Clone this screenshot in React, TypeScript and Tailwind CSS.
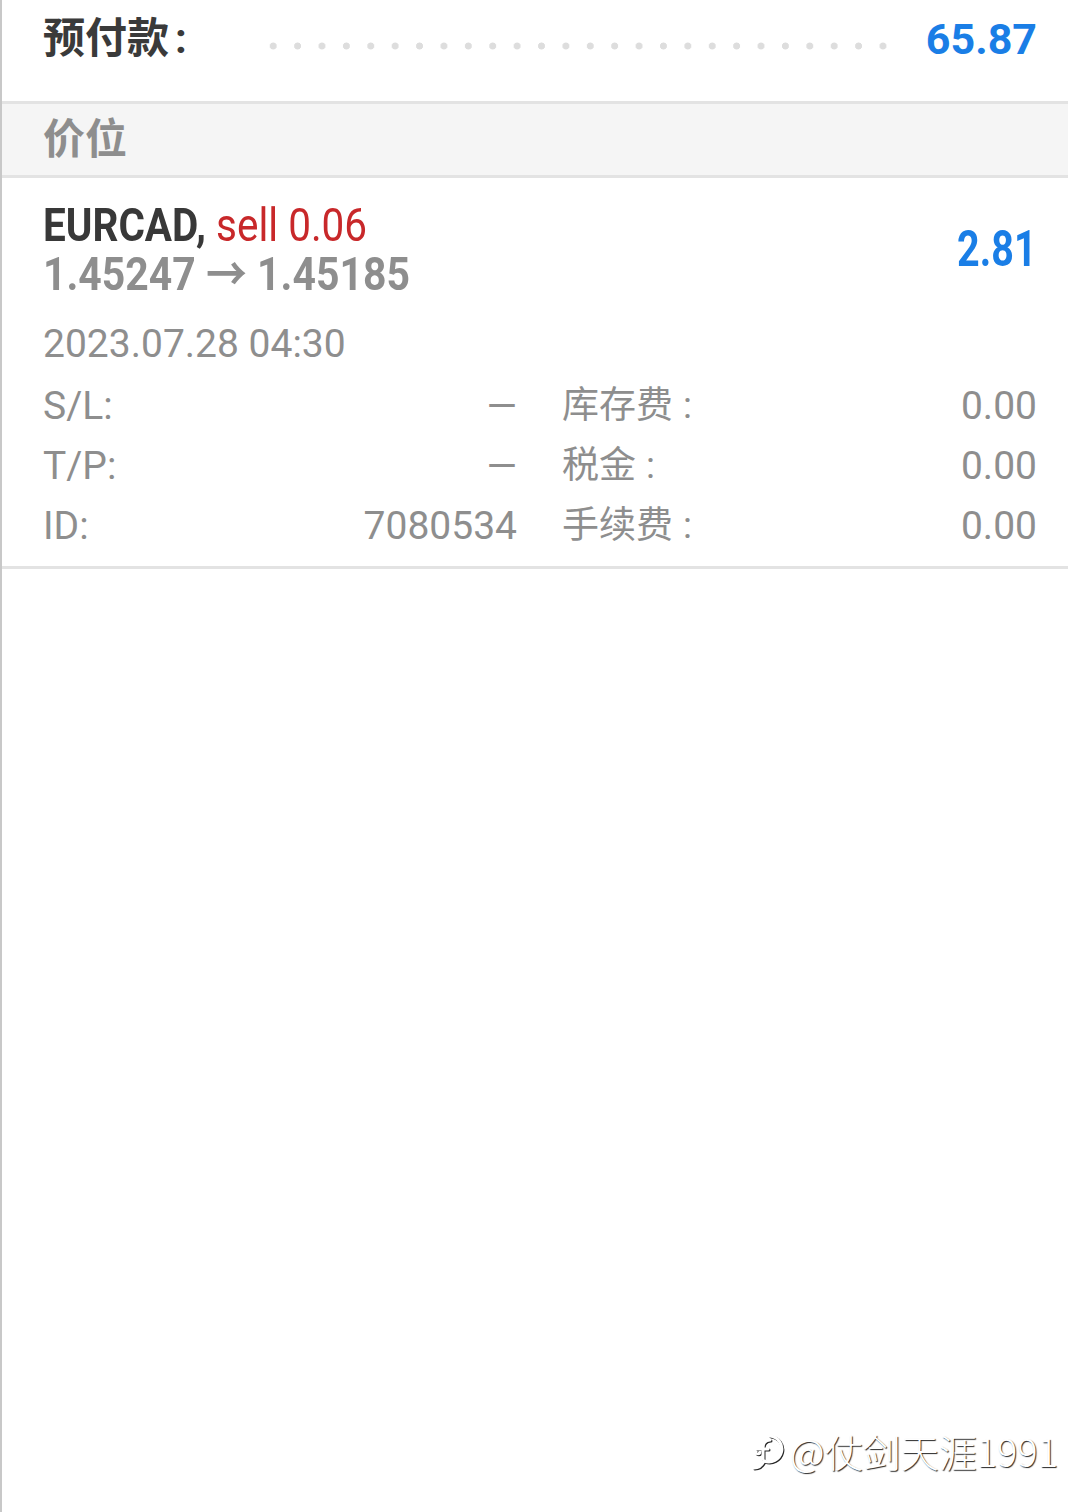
const labelFont = "font-['Roboto','Noto_Sans_CJK_SC',sans-serif]";

const Label = ({ text }: { text: string }) => {
  const cjk = /[\u4e00-\u9fff]/.test(text);
  if (!cjk) return <span>{text}</span>;
  return (
    <span className="text-[37px]">
      {text}
      <span className="ml-[10px]">:</span>
    </span>
  );
};

const Row = ({ l1, v1, l2, v2 }: { l1: string; v1: string; l2: string; v2: string }) => (
  <div className="grid grid-cols-[474px_1fr] gap-[45px] leading-[60px] text-[39px] text-[#8e8e8e]">
    <div className="flex justify-between">
      <Label text={l1} />
      <span>{v1}</span>
    </div>
    <div className="flex justify-between">
      <Label text={l2} />
      <span>{v2}</span>
    </div>
  </div>
);

export default function App() {
  return (
    <div className={`relative min-h-[1512px] bg-white border-l-2 border-[#c8c8c8] ${labelFont}`}>
      {/* prepayment */}
      <div className="flex items-start h-[101px] pl-[41px] pr-[31px] pt-[18px]">
        <span className="text-[42px] font-bold text-[#3a3a3a] leading-none">
          预付款<span className="ml-[6px]">:</span>
        </span>
        <div className="flex-1 h-[8px] ml-[74px] mr-[30px] mt-[24px] bg-[radial-gradient(circle,#dddddd_3.2px,transparent_3.8px)] bg-[length:24.4px_8px]" />
        <span className="text-[43px] font-bold text-[#1a7ee6] leading-none">65.87</span>
      </div>

      {/* section header */}
      <div className="h-[77px] flex items-center pl-[41px] bg-[#f5f5f5] border-y-[3px] border-[#e3e3e3]">
        <span className="text-[42px] font-bold text-[#8e8e8e] leading-none">价位</span>
      </div>

      {/* position */}
      <div className="pl-[41px] pr-[31px] pt-[22px] pb-[10px] border-b-[3px] border-[#e3e3e3]">
        <div className="flex items-center justify-between">
          <div className="flex flex-col">
            <div className="h-[49px] flex items-center text-[46px] whitespace-nowrap">
              <span className="inline-block origin-left scale-x-[0.88] leading-[40px]">
                <span className="font-bold text-[#383838]">EURCAD,</span>{" "}
                <span className="text-[#c8282a]">sell 0.06</span>
              </span>
            </div>
            <div className="h-[49px] flex items-center text-[46px] font-bold text-[#8e8e8e] whitespace-nowrap">
              <span className="inline-block origin-left scale-x-[0.89] leading-[40px]">1.45247 → 1.45185</span>
            </div>
          </div>
          <span className="inline-block origin-right scale-x-[0.79] text-[50px] font-bold text-[#1a7ee6] leading-none">
            2.81
          </span>
        </div>

        <div className="mt-[16px] leading-[60px] text-[39px] text-[#8e8e8e]">2023.07.28 04:30</div>
        <div className="mt-[2px]">
          <Row l1="S/L:" v1="—" l2="库存费" v2="0.00" />
          <Row l1="T/P:" v1="—" l2="税金" v2="0.00" />
          <Row l1="ID:" v1="7080534" l2="手续费" v2="0.00" />
        </div>
      </div>

      {/* watermark */}
      <div className="absolute right-[10px] top-[1430px] flex items-center gap-[6px] text-white font-['Noto_Sans_CJK_SC',sans-serif] font-light text-[38px] leading-none [text-shadow:1px_1px_1px_rgba(0,0,0,0.85)]">
        <svg width="36" height="42" viewBox="0 0 36 42" fill="none" className="drop-shadow-[1px_1px_0.5px_rgba(0,0,0,0.85)]">
          <path d="M22 6a13 13 0 1 1 -6 25" stroke="white" strokeWidth="3" strokeLinecap="round" />
          <path d="M16 31c-2 4 -6 7 -10 7" stroke="white" strokeWidth="3" strokeLinecap="round" />
          <path d="M22 10c-5 0 -7 3 -7 8v11" stroke="white" strokeWidth="3" strokeLinecap="round" />
          <path d="M9 19h11" stroke="white" strokeWidth="3" strokeLinecap="round" />
          <path d="M12 22a2 2 0 0 1 -4 0" stroke="white" strokeWidth="2.5" strokeLinecap="round" />
        </svg>
        <span>@仗剑天涯1991</span>
      </div>
    </div>
  );
}
